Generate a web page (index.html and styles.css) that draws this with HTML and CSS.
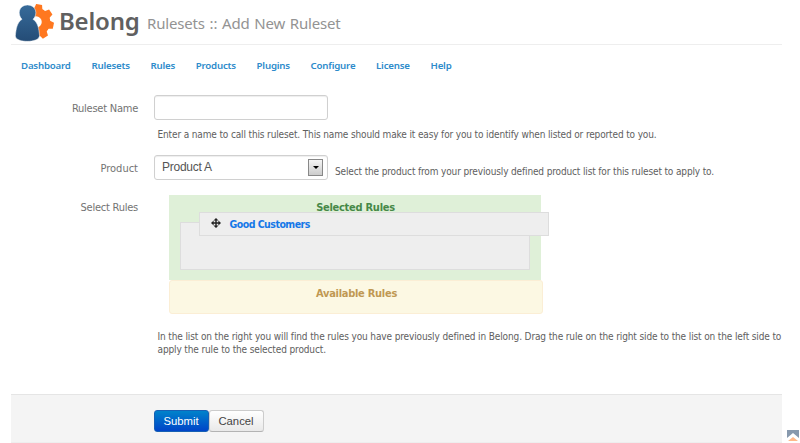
FILE: index.html
```html
<!DOCTYPE html>
<html lang="en">
<head>
<meta charset="utf-8">
<title>Belong - Add New Ruleset</title>
<link rel="stylesheet" href="styles.css">
</head>
<body>
<main class="page">
  <header class="header">
    <svg class="logo" width="40" height="38" viewBox="0 0 40 38" aria-hidden="true">
      <defs>
        <linearGradient id="person" x1="0" y1="0" x2="0" y2="1"><stop offset="0" stop-color="#376b9a"/><stop offset="1" stop-color="#244c76"/></linearGradient>
      </defs>
      <g transform="translate(21 18)" fill="#ff7820">
        <circle r="10" fill="none" stroke="#ff7820" stroke-width="8.500"/>
        <path transform="rotate(-80)" d="M13-4.200l4.800 1.200v6L13 4.200z"/>
        <path transform="rotate(-34)" d="M13-4.200l4.800 1.200v6L13 4.200z"/>
        <path transform="rotate(12)" d="M13-4.200l4.800 1.200v6L13 4.200z"/>
        <path transform="rotate(58)" d="M13-4.200l4.800 1.200v6L13 4.200z"/>
      </g>
      <path fill="url(#person)" stroke="#fff" stroke-width=".5" d="M12.500 1C3.800 1 2 10.500 7 15.300 2 18.500 1 25 .4 31.500-.5 39.300 25 39.300 24.500 31.500 24 25 23 18.500 18 15.300 23.200 10.500 21.200 1 12.500 1z"/>
    </svg>
    <h1 class="brand">Belong</h1>
    <span class="subtitle">Rulesets :: Add New Ruleset</span>
  </header>
  <nav class="nav">
    <a>Dashboard</a><a>Rulesets</a><a>Rules</a><a>Products</a><a>Plugins</a><a>Configure</a><a>License</a><a>Help</a>
  </nav>
  <form class="form">
    <div class="row row-name">
      <label class="label">Ruleset Name</label>
      <div class="field">
        <div class="control"></div>
        <p class="help help-name">Enter a name to call this ruleset. This name should make it easy for you to identify when listed or reported to you.</p>
      </div>
    </div>
    <div class="row row-product">
      <label class="label">Product</label>
      <div class="field inline">
        <div class="control select"><span class="value">Product A</span><span class="arrow"></span></div>
        <span class="help help-product">Select the product from your previously defined product list for this ruleset to apply to.</span>
      </div>
    </div>
    <div class="row row-rules">
      <label class="label">Select Rules</label>
      <div class="field">
        <section class="selected">
          <h2 class="t-selected">Selected Rules</h2>
          <div class="drop"></div>
          <div class="dragged">
            <svg width="10" height="10" viewBox="0 0 10 10" aria-hidden="true"><path fill="#222" d="M5 0l2.500 2.600H5.700v1.700h1.700V2.500L10 5 7.400 7.500V5.700H5.700v1.700h1.800L5 10 2.500 7.400h1.800V5.700H2.600v1.800L0 5l2.600-2.500v1.800h1.700V2.600H2.500z"/></svg>
            <span class="rule">Good Customers</span>
          </div>
        </section>
        <section class="available"><h2 class="t-available">Available Rules</h2></section>
        <p class="help help-rules">In the list on the right you will find the rules you have previously defined in Belong. Drag the rule on the right side to the list on the left side to<br>apply the rule to the selected product.</p>
      </div>
    </div>
  </form>
  <footer class="actions">
    <button type="button" class="btn primary">Submit</button><button type="button" class="btn">Cancel</button>
  </footer>
</main>
<svg class="top" width="14" height="13" viewBox="0 0 14 13" aria-hidden="true"><path fill="#8799ad" d="M1 1h12v8L7 4 1 9z"/><path fill="#ffb98a" d="M2 12l5-4 5 4z"/></svg>
</body>
</html>
```
FILE: styles.css
```css
* { box-sizing: border-box; }
body { margin: 0; width: 800px; height: 443px; overflow: hidden; background: #fff; font-family: "DejaVu Sans Condensed", "DejaVu Sans", sans-serif; color: #666; }
h1, h2, p { margin: 0; }
.page { width: 771px; margin-left: 11px; }
.header { display: flex; height: 45px; padding: 4px 0 0 4px; border-bottom: 1px solid #eee; white-space: nowrap; }
.logo { flex: none; }
.brand { width: 82px; margin-left: 4px; font: 600 24px/34px "Noto Sans", sans-serif; color: #606060; letter-spacing: -.2px; }
.subtitle { margin-left: 6px; font: 15px/39px "Noto Sans", sans-serif; color: #939393; letter-spacing: -.17px; word-spacing: 1px; }
.nav { display: flex; height: 50px; padding: 14px 0 0 10px; gap: 20.700px; font: 600 9.700px/14px "Noto Sans", sans-serif; color: #2d8bcb; letter-spacing: -.2px; }
.row { display: flex; }
.label { width: 127px; margin-right: 15.500px; text-align: right; font-size: 11px; line-height: 16px; color: #737373; white-space: nowrap; letter-spacing: -.24px; }
.field { width: 628.500px; }
.row-name { height: 60px; }
.row-name .label, .row-product .label { padding-top: 6px; }
.row-product .label { letter-spacing: 0; }
.control { width: 174.500px; height: 25px; border: 1px solid #d0d0d0; border-radius: 3px; box-shadow: inset 0 1px 1px #eee; background: #fff; }
.help { font-size: 10px; line-height: 13px; white-space: nowrap; color: #606060; letter-spacing: -.14px; }
.help-name { margin: 8px 0 0 4px; }
.row-product { height: 40px; }
.inline { display: flex; }
.select { display: flex; flex: none; justify-content: space-between; padding: 3px 4px 0 7.500px; }
.value { font: 12px/17px "Liberation Sans", sans-serif; color: #555; letter-spacing: -.25px; }
.arrow { display: flex; width: 15px; height: 17px; align-items: center; justify-content: center; border: 1px solid #888; background: linear-gradient(#f5f5f5, #ccc); }
.arrow::after { content: ""; border: 3px solid transparent; border-top-color: #000; border-bottom: 0; }
.help-product { margin: 10px 0 0 7px; }
.row-rules .label { padding-top: 5px; }
.selected { position: relative; width: 372px; height: 85px; margin-left: 15.500px; padding: 6px 11px 0; background: #dff0d8; }
h2 { font-size: 11px; line-height: 14px; text-align: center; font-weight: 700; white-space: nowrap; letter-spacing: -.27px; text-indent: 1px; }
.t-selected { color: #468847; }
.drop { height: 48px; margin-top: 7px; border: 1px solid #ddd; background: #eee; }
.dragged { position: absolute; left: 30px; top: 16.500px; display: flex; width: 350px; height: 24px; padding: 5px 0 0 11px; border: 1px solid #ddd; background: #eee; }
.rule { margin: -1px 0 0 8.500px; font-size: 10.500px; line-height: 14px; font-weight: 700; color: #1478e8; white-space: nowrap; letter-spacing: -.52px; }
.available { width: 374px; height: 34px; margin-left: 15.500px; padding: 6px 0 0; border: 1px solid #fbeed5; border-radius: 3px; background: #fcf8e3; }
.t-available { color: #c09853; }
.help-rules { margin: 16px 0 0 4px; letter-spacing: -.127px; }
.actions { display: flex; height: 49px; margin-top: 38px; padding: 15px 0 0 142.500px; border-top: 1px solid #e5e5e5; border-bottom: 1px solid #eee; background: #f4f4f4; }
.btn { width: 55px; height: 22px; padding: 0; border: 1px solid #ccc; border-bottom-color: #b3b3b3; border-radius: 3px; background: linear-gradient(#fff, #e9e9e9); font: 11.300px/18px "Liberation Sans", sans-serif; color: #444; }
.primary { border-color: #1760b4; background: linear-gradient(#0083cb, #0044c8); color: #fff; }
.top { position: absolute; left: 786px; top: 429px; }
```
